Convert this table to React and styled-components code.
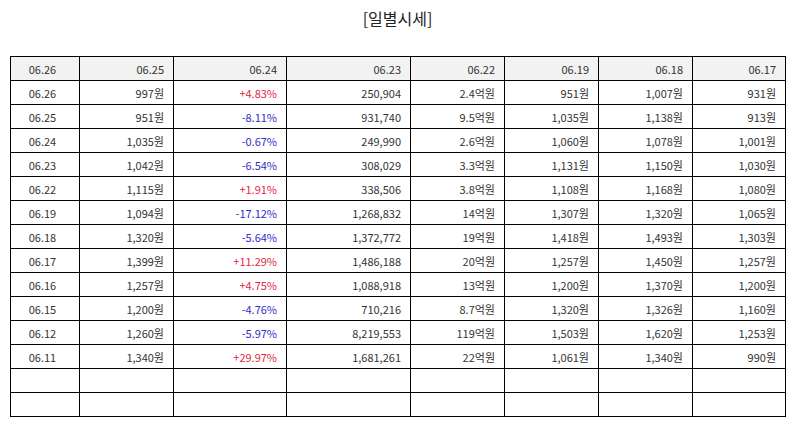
import React from 'react';
import styled, { createGlobalStyle } from 'styled-components';

const GlobalStyle = createGlobalStyle`
  body {
    margin: 0;
    background: #fff;
    font-family: "Noto Sans CJK KR", "Noto Sans", sans-serif;
  }
`;

const Page = styled.div`
  padding: 6px 9px 0 10px;
`;

const Title = styled.h2`
  margin: 0 0 21px;
  height: 29px;
  line-height: 24px;
  text-align: center;
  font-size: 16px;
  font-weight: 400;
  color: #222;
`;

const Table = styled.table`
  width: 775px;
  border-collapse: collapse;
  table-layout: fixed;
  font-size: 11px;
  color: #333;
`;

const Cell = styled.td`
  height: 23px;
  padding: 0 9px 0 4px;
  border: 1px solid #000;
  text-align: ${p => (p.$center ? 'center' : 'right')};
  background: ${p => (p.$head ? '#f2f2f2' : '#fff')};
  color: ${p => (p.$tone === 'up' ? '#e0283c' : p.$tone === 'down' ? '#2e2ec8' : '#333')};
  white-space: nowrap;
`;

const widths = [69, 94, 113, 124, 94, 94, 94, 93];
const head = ['06.26', '06.25', '06.24', '06.23', '06.22', '06.19', '06.18', '06.17'];

const rows = [
  ['06.26', '997원', '+4.83%', '250,904', '2.4억원', '951원', '1,007원', '931원'],
  ['06.25', '951원', '-8.11%', '931,740', '9.5억원', '1,035원', '1,138원', '913원'],
  ['06.24', '1,035원', '-0.67%', '249,990', '2.6억원', '1,060원', '1,078원', '1,001원'],
  ['06.23', '1,042원', '-6.54%', '308,029', '3.3억원', '1,131원', '1,150원', '1,030원'],
  ['06.22', '1,115원', '+1.91%', '338,506', '3.8억원', '1,108원', '1,168원', '1,080원'],
  ['06.19', '1,094원', '-17.12%', '1,268,832', '14억원', '1,307원', '1,320원', '1,065원'],
  ['06.18', '1,320원', '-5.64%', '1,372,772', '19억원', '1,418원', '1,493원', '1,303원'],
  ['06.17', '1,399원', '+11.29%', '1,486,188', '20억원', '1,257원', '1,450원', '1,257원'],
  ['06.16', '1,257원', '+4.75%', '1,088,918', '13억원', '1,200원', '1,370원', '1,200원'],
  ['06.15', '1,200원', '-4.76%', '710,216', '8.7억원', '1,320원', '1,326원', '1,160원'],
  ['06.12', '1,260원', '-5.97%', '8,219,553', '119억원', '1,503원', '1,620원', '1,253원'],
  ['06.11', '1,340원', '+29.97%', '1,681,261', '22억원', '1,061원', '1,340원', '990원'],
  ['', '', '', '', '', '', '', ''],
  ['', '', '', '', '', '', '', ''],
];

const toneOf = (v, i) => {
  if (i !== 2 || !v) return null;
  return v.startsWith('+') ? 'up' : 'down';
};

export default function App() {
  return (
    <>
      <GlobalStyle />
      <Page>
        <Title>[일별시세]</Title>
        <Table>
          <colgroup>
            {widths.map((w, i) => (
              <col key={i} style={{ width: w }} />
            ))}
          </colgroup>
          <tbody>
            <tr>
              {head.map((h, i) => (
                <Cell key={i} $head $center={i === 0}>
                  {h}
                </Cell>
              ))}
            </tr>
            {rows.map((r, ri) => (
              <tr key={ri}>
                {r.map((v, i) => (
                  <Cell key={i} $center={i === 0} $tone={toneOf(v, i)}>
                    {v}
                  </Cell>
                ))}
              </tr>
            ))}
          </tbody>
        </Table>
      </Page>
    </>
  );
}
